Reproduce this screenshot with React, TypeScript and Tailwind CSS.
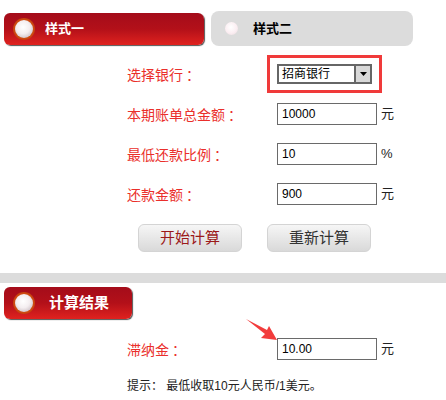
const font = { fontFamily: '"Liberation Sans", "Noto Sans CJK SC", sans-serif' };
const labelFont = { fontFamily: '"Noto Sans CJK SC", sans-serif' };

function Ball({ big }: { big?: boolean }) {
  if (big) {
    return (
      <span className="flex h-[22px] w-[22px] items-center justify-center rounded-full bg-[radial-gradient(circle_at_50%_50%,#d04a10_60%,#a02a0a_100%)]">
        <span className="h-[18px] w-[18px] rounded-full bg-[radial-gradient(circle_at_45%_40%,#ffffff_0%,#f4eef0_45%,#b8a8b0_100%)]" />
      </span>
    );
  }
  return <span className="h-[13px] w-[13px] rounded-full bg-[radial-gradient(circle_at_45%_40%,#ffffff_0%,#fbeef2_55%,#e8d8dc_100%)]" />;
}

function RedTab({ label, w, bold }: { label: string; w: string; bold?: boolean }) {
  return (
    <div
      className={`flex h-[32px] ${w} items-center rounded-[6px] bg-gradient-to-b from-[#a40c1a] via-[#b31019] to-[#e0221f] pl-[9px] shadow-[1px_1px_1px_#555]`}
    >
      <Ball big />
      <span
        className={`ml-[10px] text-white ${bold ? 'ml-[14px] text-[15px] font-bold' : 'text-[13px] font-semibold'}`}
      >
        {label}
      </span>
    </div>
  );
}

function Label({ text }: { text: string }) {
  // colon pushed right so it sits centred like the original
  const body = text.replace('：', '');
  return (
    <span className="flex w-[150px] text-[14px] text-[#ea2f2b]" style={labelFont}>
      {body}
      <span className="ml-[3px]">：</span>
    </span>
  );
}

function Row({ label, value, unit }: { label: string; value: string; unit?: string }) {
  return (
    <div className="flex h-[40px] items-center">
      <Label text={label} />
      <div className="flex h-[22px] w-[100px] items-center border border-[#6a6a6a] bg-white pl-[4px] text-[12px] text-black">
        {value}
      </div>
      {unit && <span className="ml-[4px] text-[13px] text-[#222]">{unit}</span>}
    </div>
  );
}

export default function App() {
  return (
    <div className="relative h-[400px] w-[446px] overflow-hidden bg-white" style={font}>
      <div className="flex items-center gap-[7px] pl-[4px] pt-[11px]">
        <RedTab label="样式一" w="w-[200px]" />
        <div className="flex h-[35px] w-[202px] items-center rounded-[8px] bg-[#dcdcdc] pl-[14px]">
          <Ball />
          <span className="ml-[15px] text-[13px] font-semibold text-black">样式二</span>
        </div>
      </div>

      <div className="mt-[8px] pl-[127px]">
        <div className="flex h-[40px] items-center">
          <Label text="选择银行：" />
          <div className="ml-[-10px] border-[3px] border-[#f03a3a] py-[6px] pl-[7px] pr-[7px]">
            <div className="flex h-[20px] w-[95px] items-center border-2 border-[#666] bg-white">
              <span className="flex-1 pl-[3px] text-[12px] text-black">招商银行</span>
              <span className="flex h-full w-[16px] items-center justify-center border-l-2 border-[#666] bg-[#d8d8d8]">
                <svg width="7" height="4" viewBox="0 0 7 4">
                  <path d="M0 0h7L3.5 4z" fill="#000" />
                </svg>
              </span>
            </div>
          </div>
        </div>
        <Row label="本期账单总金额：" value="10000" unit="元" />
        <Row label="最低还款比例：" value="10" unit="%" />
        <Row label="还款金额：" value="900" unit="元" />

        <div className="mt-[10px] flex gap-[25px] pl-[11px]">
          <button className="flex h-[28px] w-[104px] items-center justify-center rounded-[6px] border border-[#d4d4d4] bg-gradient-to-b from-[#f6f6f6] to-[#d9d9d9] text-[15px] text-[#9c1a1a]">
            开始计算
          </button>
          <button className="flex h-[28px] w-[104px] items-center justify-center rounded-[6px] border border-[#d4d4d4] bg-gradient-to-b from-[#f6f6f6] to-[#d9d9d9] text-[15px] text-[#333]">
            重新计算
          </button>
        </div>
      </div>

      <div className="mt-[21px] h-[10px] w-full bg-[#dcdcdc]" />

      <div className="mt-[4px] pl-[4px]">
        <RedTab label="计算结果" w="w-[128px]" bold />
      </div>

      <div className="mt-[10px] pl-[127px]">
        <Row label="滞纳金：" value="10.00" unit="元" />
        <p className="mt-[8px] text-[12px] text-[#222]">提示： 最低收取10元人民币/1美元。</p>
      </div>

      <svg className="absolute left-[245px] top-[318px]" width="34" height="24" viewBox="0 0 34 24">
        <path d="M1 1 L22 12 L24 8 L32 22 L16 20 L20 16 Z" fill="#f23c3c" />
      </svg>
    </div>
  );
}
